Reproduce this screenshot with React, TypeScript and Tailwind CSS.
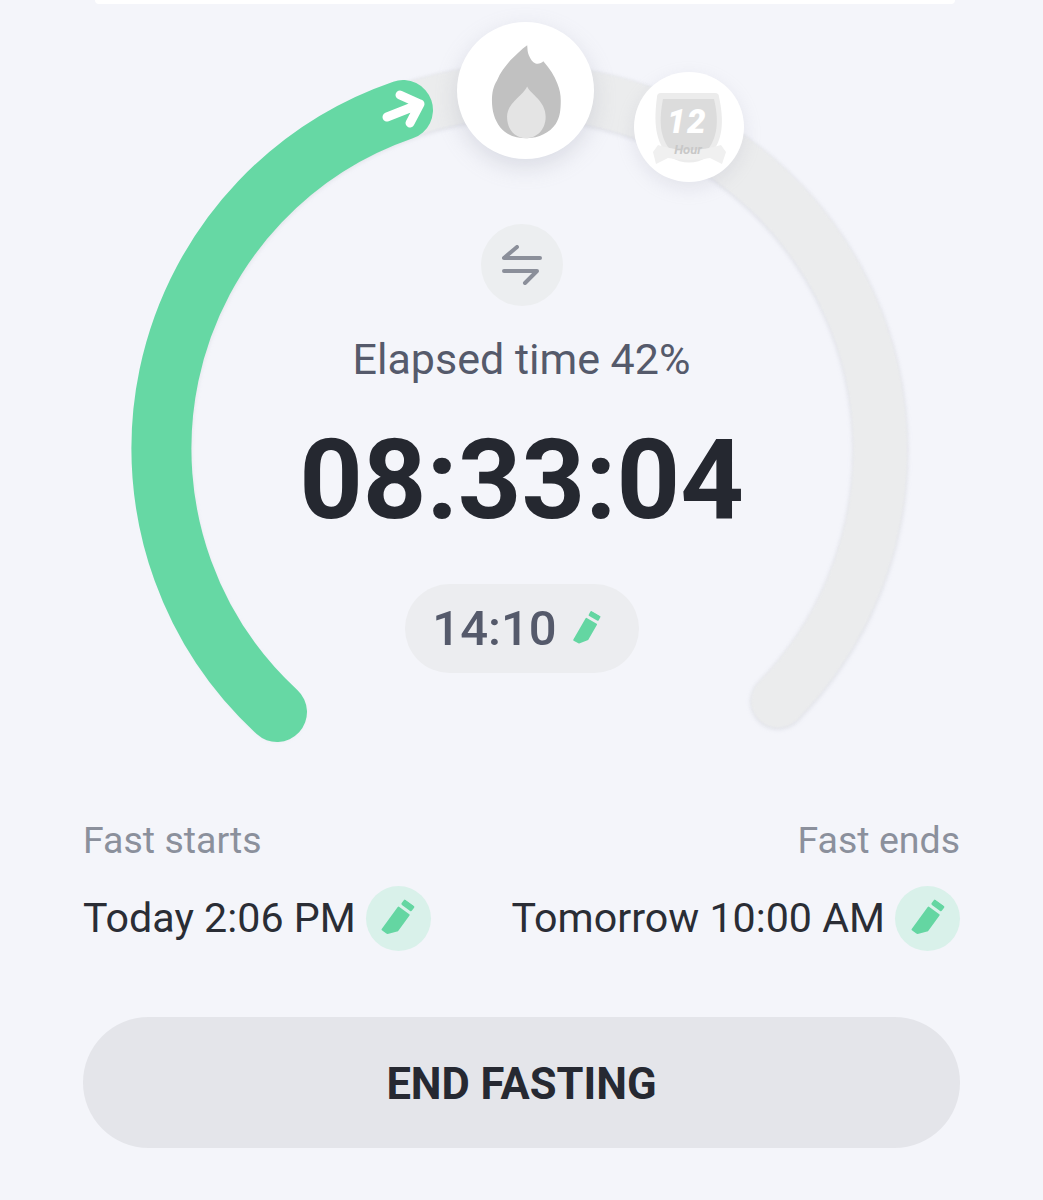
const Pencil = ({ className }: { className: string }) => (
  <svg viewBox="0 0 24 44" className={className} fill="#64d6a2">
    <rect x="5" y="0" width="14" height="7" rx="1.5" />
    <path d="M5 10.5 H19 Q20 10.5 20 11.5 V33 L12.5 42 Q12 42.5 11 42.5 L5 42.5 Q4 42.5 4 41.5 V11.5 Q4 10.5 5 10.5 Z" />
  </svg>
);

const Flame = () => (
  <svg viewBox="0 0 136 136" className="h-full w-full">
    <path
      d="M69.7 23 C70 27 70 30 71.3 33 C73 37 75 40 78 41.3 C81 42 84 41 85.7 39 C92 46 97 54 99.7 61.3 C102 67 103 72 103 78 C103 88 102 95 98 101.3 C92 110 81 115.3 69.7 115.3 C58 115.3 49 112 43 104.7 C37 97 34.7 88 34.7 78 C34.7 70 36 64 39.7 58 C43 50 48 44 53 38 C58 33 64 27 69.7 23 Z"
      fill="#c1c1c1"
    />
    <path
      d="M69.7 64 C73 72 88 78 88 94 C88 107 79 115.3 68.7 115.3 C58 115.3 49.7 107 49.7 94 C49.7 80 65 74 69.7 64 Z"
      fill="#e4e4e4"
    />
  </svg>
);

const Medal = () => (
  <svg viewBox="0 0 110 110" className="h-full w-full">
    <path d="M27 21 H81 Q85 21 85 25 C90 48 90 70 74 85 Q55 96 36 85 C20 70 20 48 23 25 Q23 21 27 21 Z" fill="#ececec" />
    <path d="M29 27 H80 C85 48 84 66 72 80 Q55 88 38 80 C25 66 25 48 29 27 Z" fill="#dcdcdc" />
    <path d="M24 73 Q55 83 87 73 L92 80 L88 92 L76 86 Q55 90 34 86 L22 92 L19 80 Z" fill="#f0f0f0" />
    <text x="53" y="61" textAnchor="middle" fontFamily="Roboto, sans-serif" fontWeight="900" fontStyle="italic" fontSize="33" letterSpacing="1.5" fill="#ffffff">
      12
    </text>
    <text x="54" y="82" textAnchor="middle" fontFamily="Roboto, sans-serif" fontWeight="700" fontStyle="italic" fontSize="13" fill="#c8c8c8">
      Hour
    </text>
  </svg>
);

const TimeRow = ({ time }: { time: string }) => (
  <div className="flex items-center gap-[10px]">
    <span className="text-[41.2px] font-[450] leading-none text-[#2a2d35]">{time}</span>
    <span className="flex h-[65px] w-[65px] items-center justify-center rounded-full bg-[#d9f1ea]">
      <Pencil className="h-[40px] w-[22px] rotate-[36deg]" />
    </span>
  </div>
);

export default function App() {
  return (
    <div className="h-[1200px] w-full overflow-hidden bg-[#f4f5fa] font-['Roboto',sans-serif]">
      <div className="ml-[95px] mr-[88px] h-1 rounded-b-2xl bg-white" />

      <section className="relative h-[766px]">
        {/* dial, coordinates are page pixels */}
        <svg viewBox="0 0 1043 766" className="absolute left-0 top-[-4px] h-[766px] w-[1043px]" fill="none">
          <path
            d="M277 712 A358.5 358.5 0 1 1 778 701"
            stroke="#ebeced"
            strokeWidth="54"
            strokeLinecap="round"
            className="blur-[1px] drop-shadow-[0_1px_2px_rgba(170,172,185,0.35)]"
          />
          <path d="M277 712 A358 358 0 0 1 403 110" stroke="#66d8a4" strokeWidth="60" strokeLinecap="round" />
          <path d="M387 117 L420 104 M400 95 L420 104 L410 123" stroke="#ffffff" strokeWidth="9" strokeLinecap="round" strokeLinejoin="round" />
        </svg>

        <div className="absolute left-[457px] top-[18px] h-[137px] w-[137px] rounded-full bg-white shadow-[0_8px_22px_rgba(160,162,180,0.3)]">
          <Flame />
        </div>
        <div className="absolute left-[634px] top-[68px] h-[110px] w-[110px] rounded-full bg-white shadow-[0_6px_18px_rgba(160,162,180,0.2)]">
          <Medal />
        </div>

        <div className="relative flex flex-col items-center pt-[220px]">
          <button className="flex h-[82px] w-[82px] items-center justify-center rounded-full bg-[#eceef0]">
            <svg viewBox="0 0 40 40" className="h-[40px] w-[40px]" fill="none" stroke="#8b8f9a" strokeWidth="4" strokeLinecap="round" strokeLinejoin="round">
              <path d="M2 13 H38 M2 13 L15 2" />
              <path d="M2 26 H35 L23 38" />
            </svg>
          </button>
          <p className="mt-[30px] text-[43px] leading-[47px] text-[#555a6b]">Elapsed time 42%</p>
          <p className="mt-[31px] text-[111px] font-bold leading-[133px] text-[#252830]">08:33:04</p>
          <div className="mt-[37px] flex h-[89px] w-[234px] items-center justify-center gap-[20px] rounded-full bg-[#ecedf0] pr-[14px]">
            <span className="text-[49px] font-medium leading-none text-[#555a6b]">14:10</span>
            <Pencil className="h-[36px] w-[20px] rotate-[30deg]" />
          </div>
        </div>
      </section>

      <div className="mx-[83px] mt-[49px] flex items-start justify-between">
        <div className="flex flex-col items-start gap-[25px]">
          <span className="text-[37.5px] font-[450] leading-[42px] text-[#8b909c]">Fast starts</span>
          <TimeRow time="Today 2:06 PM" />
        </div>
        <div className="flex flex-col items-end gap-[25px]">
          <span className="text-[37.5px] font-[450] leading-[42px] text-[#8b909c]">Fast ends</span>
          <TimeRow time="Tomorrow 10:00 AM" />
        </div>
      </div>

      <button className="mx-[83px] mt-[66px] flex h-[131px] w-[877px] items-center justify-center rounded-full bg-[#e4e5ea] pt-[4px] text-[43.5px] font-bold text-[#262932]">
        END FASTING
      </button>
    </div>
  );
}
